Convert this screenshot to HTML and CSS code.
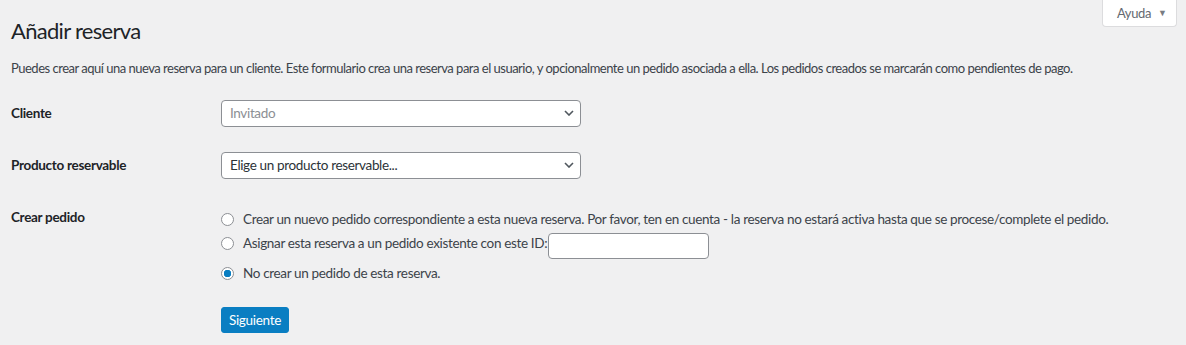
FILE: index.html
```html
<!DOCTYPE html>
<html lang="es">

<head>
    <meta charset="UTF-8">
    <meta name="viewport" content="width=device-width, initial-scale=1.0">
    <title>Añadir reserva</title>
    <link rel="stylesheet" href="styles.css">
</head>

<body>
    <div class="screen-meta-links">
        <button class="help-btn">Ayuda <span class="arrow">▼</span></button>
    </div>
    <div class="wrap">
        <h1>Añadir reserva</h1>
        <p class="intro">Puedes crear aquí una nueva reserva para un cliente. Este formulario crea una reserva para el usuario, y opcionalmente un pedido asociada a ella. Los pedidos creados se marcarán como pendientes de pago.</p>
        <form>
            <table class="form-table">
                <tr>
                    <th>Cliente</th>
                    <td>
                        <div class="select">
                            <span class="placeholder">Invitado</span>
                            <svg class="chevron" width="10" height="6" viewBox="0 0 10 6"><path d="M1 1l4 4 4-4" fill="none" stroke="#50575e" stroke-width="1.6"/></svg>
                        </div>
                    </td>
                </tr>
                <tr>
                    <th>Producto reservable</th>
                    <td>
                        <div class="select">
                            <span>Elige un producto reservable...</span>
                            <svg class="chevron" width="10" height="6" viewBox="0 0 10 6"><path d="M1 1l4 4 4-4" fill="none" stroke="#50575e" stroke-width="1.6"/></svg>
                        </div>
                    </td>
                </tr>
                <tr>
                    <th>Crear pedido</th>
                    <td class="options">
                        <ul class="radio-list">
                            <li><input type="radio" name="pedido"><label>Crear un nuevo pedido correspondiente a esta nueva reserva. Por favor, ten en cuenta - la reserva no estará activa hasta que se procese/complete el pedido.</label></li>
                            <li><input type="radio" name="pedido"><label>Asignar esta reserva a un pedido existente con este ID:</label><input type="text" class="order-id"></li>
                            <li><input type="radio" name="pedido" checked><label>No crear un pedido de esta reserva.</label></li>
                        </ul>
                        <button type="button" class="button-primary">Siguiente</button>
                    </td>
                </tr>
            </table>
        </form>
    </div>
</body>

</html>
```

FILE: styles.css
```css
* {
    box-sizing: border-box;
}

body {
    margin: 0;
    background-color: #f0f0f1;
    color: #3c434a;
    font-family: Lato, "Noto Sans", sans-serif;
    font-size: 13px;
    letter-spacing: -0.5px;
}

.screen-meta-links {
    float: right;
    margin-right: 9px;
}

.help-btn {
    display: flex;
    align-items: center;
    gap: 7px;
    width: 75px;
    height: 27px;
    padding: 0 0 1px 14px;
    border: 1px solid #dcdcde;
    border-top: none;
    border-radius: 0 0 4px 4px;
    background-color: #fff;
    color: #646970;
    font-family: inherit;
    font-size: 13px;
    letter-spacing: -0.4px;
}

.help-btn .arrow {
    font-size: 9px;
    color: #787c82;
}

.wrap {
    padding: 16px 20px 0 11px;
}

h1 {
    margin: 0;
    color: #1d2327;
    font-size: 22px;
    font-weight: 400;
    line-height: 30px;
    letter-spacing: -0.7px;
}

.intro {
    margin: 13px 0 0;
    line-height: 18px;
}

.form-table {
    margin-top: 10px;
    border-collapse: collapse;
    font-size: 13.5px;
    letter-spacing: -0.35px;
}

.form-table th {
    width: 200px;
    padding: 17px 10px 0 0;
    vertical-align: top;
    text-align: left;
    color: #1d2327;
    font-weight: 700;
    line-height: 18px;
    letter-spacing: -0.3px;
}

.form-table td {
    padding: 13px 10px 12px;
    vertical-align: top;
}

.select {
    display: flex;
    align-items: center;
    justify-content: space-between;
    width: 360px;
    height: 27px;
    padding: 0 6px 1px 8px;
    border: 1px solid #8c8f94;
    border-radius: 4px;
    background-color: #fff;
    color: #2c3338;
}

.select .placeholder {
    color: #8c8f94;
}

.form-table td.options {
    padding-top: 18px;
}

.radio-list {
    display: flex;
    flex-direction: column;
    gap: 4px;
    margin: 0;
    padding: 0;
    list-style: none;
}

.radio-list li {
    display: flex;
    align-items: flex-start;
    line-height: 20px;
}

.radio-list input[type="radio"] {
    appearance: none;
    flex: none;
    width: 13px;
    height: 13px;
    margin: 4px 9px 0 0;
    border: 1px solid #8c8f94;
    border-radius: 50%;
    background-color: #fff;
}

.radio-list input[type="radio"]:checked {
    background: radial-gradient(circle, #0a7ec2 0 3.5px, #fff 4px);
}

.order-id {
    width: 161px;
    height: 26px;
    margin-left: 1px;
    border: 1px solid #8c8f94;
    border-radius: 4px;
    background-color: #fff;
}

.button-primary {
    display: block;
    width: 68px;
    height: 26px;
    margin-top: 24px;
    padding: 0 0 1px;
    border: 1px solid #0a7ec2;
    border-radius: 3px;
    background-color: #0a7ec2;
    color: #fff;
    font-family: inherit;
    font-size: 13.5px;
    letter-spacing: -0.3px;
}
```
